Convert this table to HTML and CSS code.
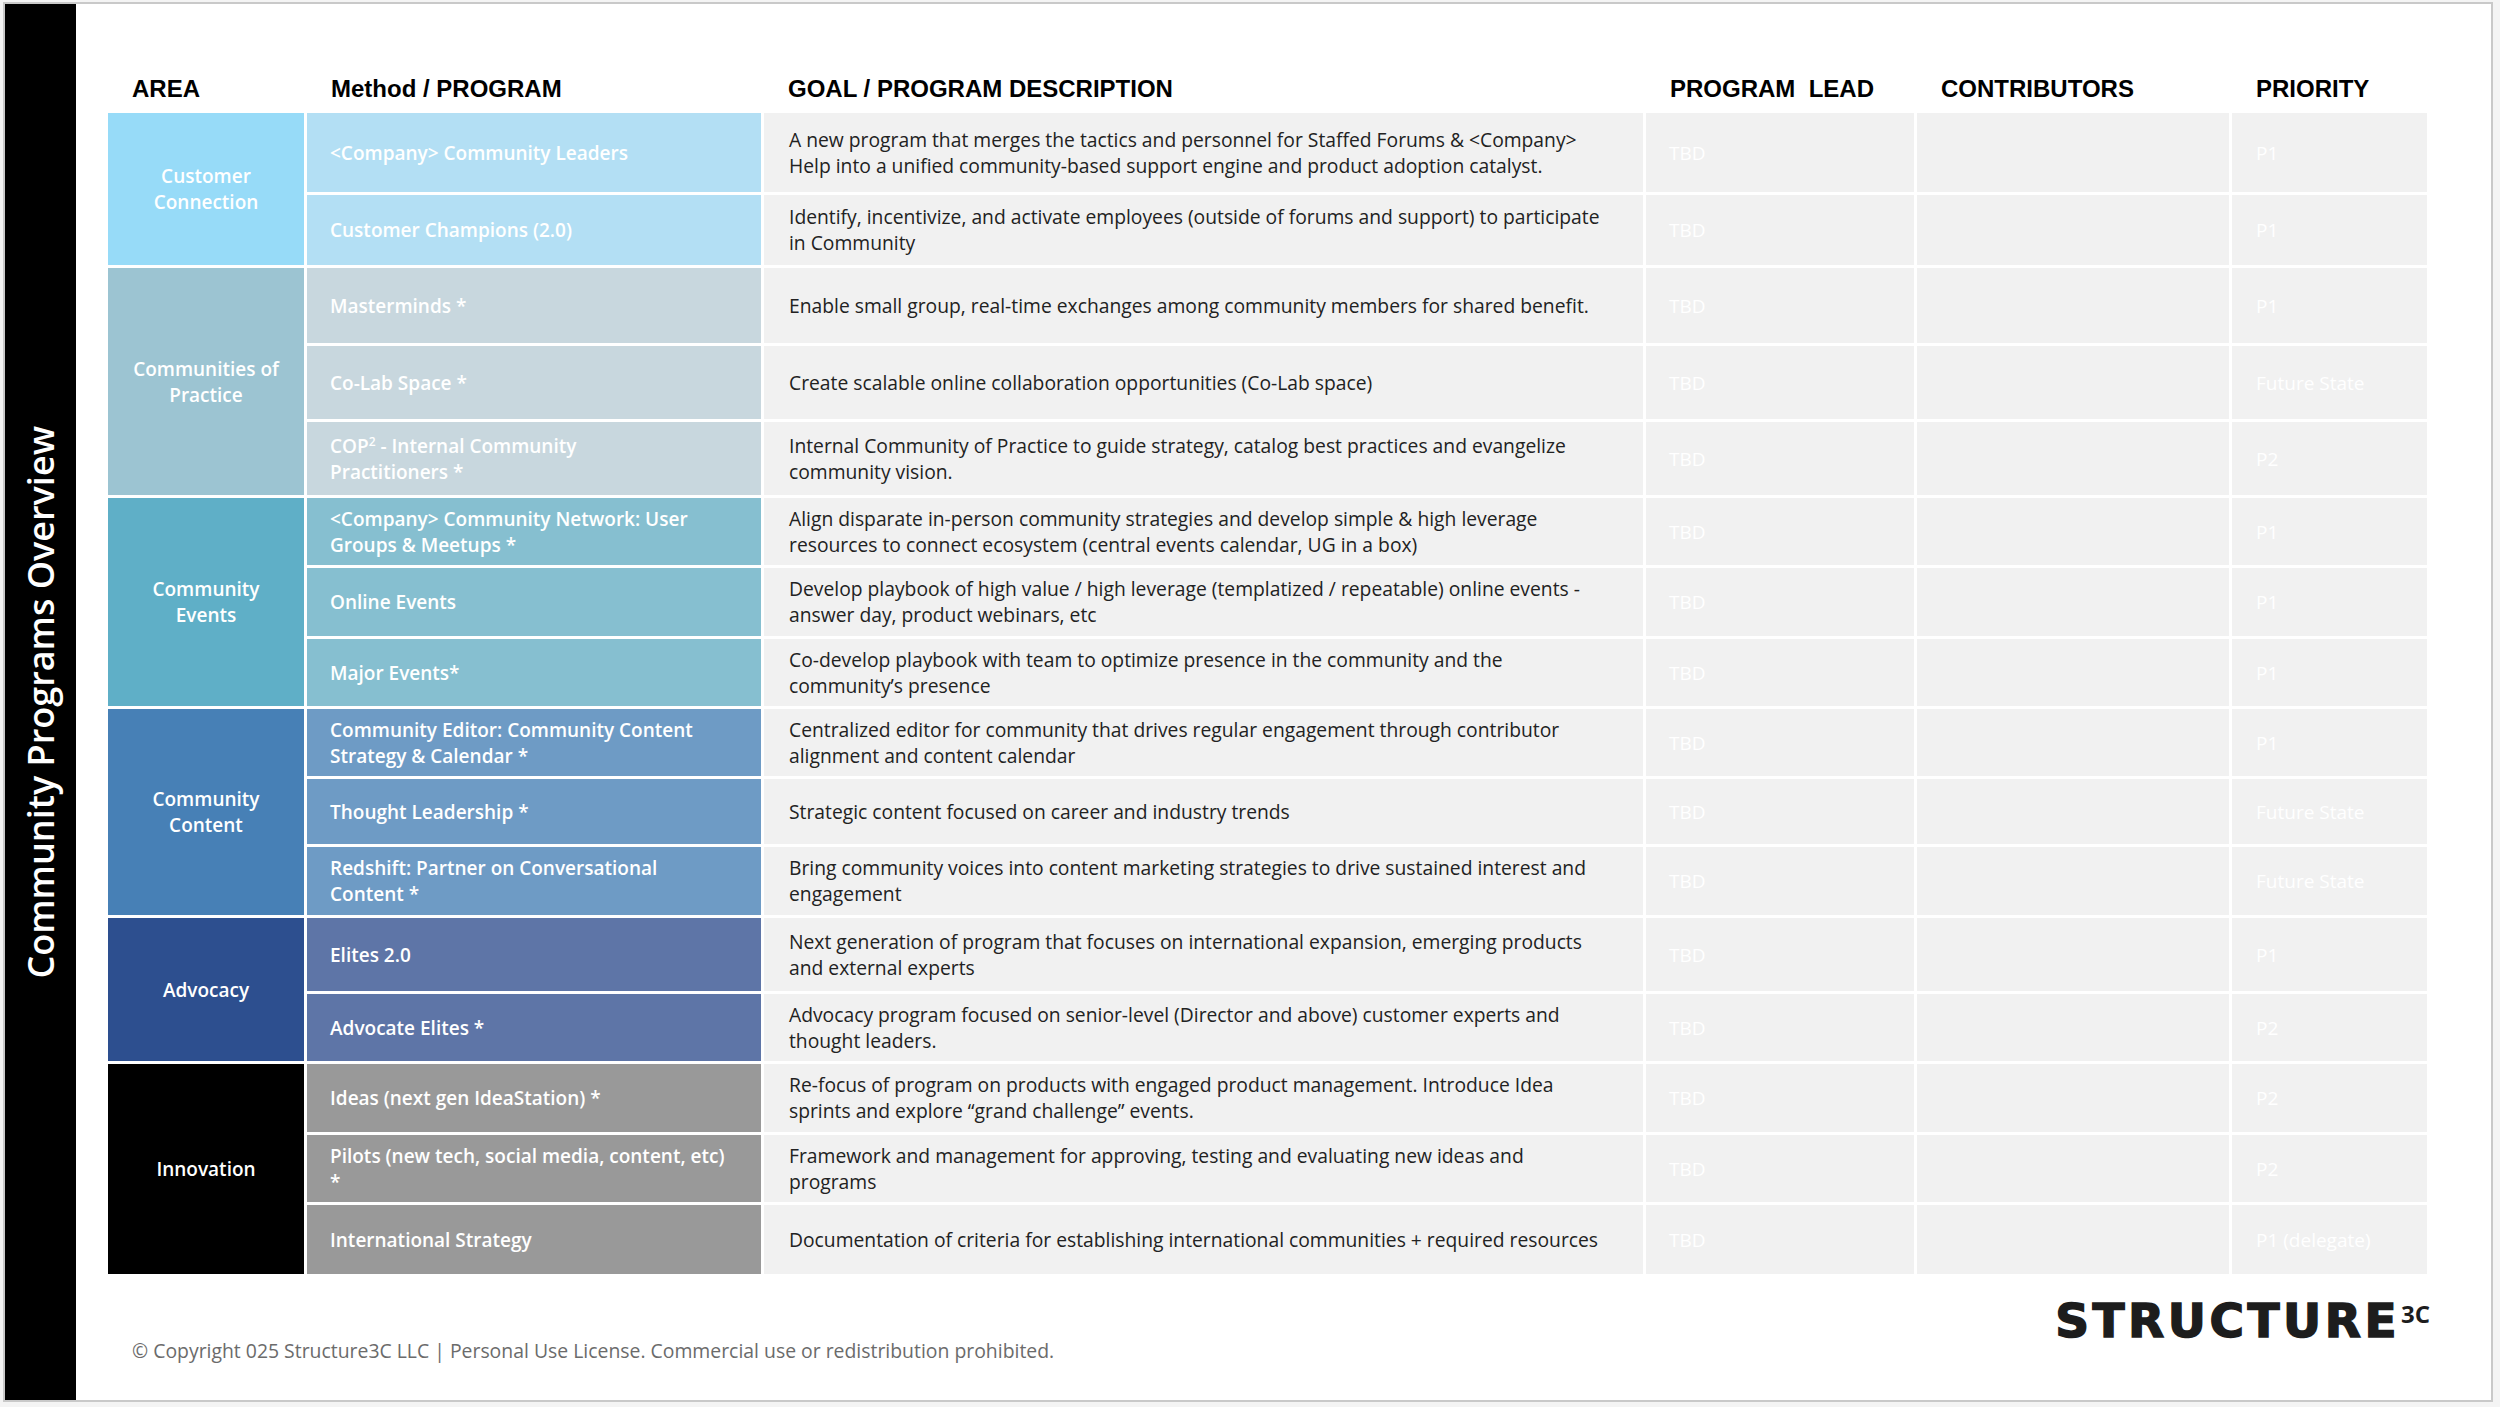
FILE: index.html
```html
<!DOCTYPE html>
<html lang="en">
<head>
<meta charset="utf-8">
<title>Community Programs Overview</title>
<link rel="stylesheet" href="styles.css">
</head>
<body>
<div class="slide">
  <aside class="sidebar">
    <div class="sidebar-title">Community Programs Overview</div>
  </aside>
  <main class="main">
    <div class="thead">
      <div class="th">AREA</div>
      <div class="th">Method / PROGRAM</div>
      <div class="th">GOAL / PROGRAM DESCRIPTION</div>
      <div class="th">PROGRAM &nbsp;LEAD</div>
      <div class="th">CONTRIBUTORS</div>
      <div class="th">PRIORITY</div>
    </div>
    <div class="tbody">
      <!-- Customer Connection -->
      <div class="cell area cc span2">Customer<br>Connection</div>
      <div class="cell method cc-m">&lt;Company&gt; Community Leaders</div>
      <div class="cell desc">A new program that merges the tactics and personnel for Staffed Forums &amp; &lt;Company&gt;<br>Help into a unified community-based support engine and product adoption catalyst.</div>
      <div class="cell lead">TBD</div><div class="cell contrib"></div><div class="cell prio">P1</div>

      <div class="cell method cc-m">Customer Champions (2.0)</div>
      <div class="cell desc">Identify, incentivize, and activate employees (outside of forums and support) to participate<br>in Community</div>
      <div class="cell lead">TBD</div><div class="cell contrib"></div><div class="cell prio">P1</div>

      <!-- Communities of Practice -->
      <div class="cell area cop span3">Communities of<br>Practice</div>
      <div class="cell method cop-m">Masterminds *</div>
      <div class="cell desc">Enable small group, real-time exchanges among community members for shared benefit.</div>
      <div class="cell lead">TBD</div><div class="cell contrib"></div><div class="cell prio">P1</div>

      <div class="cell method cop-m">Co-Lab Space *</div>
      <div class="cell desc">Create scalable online collaboration opportunities (Co-Lab space)</div>
      <div class="cell lead">TBD</div><div class="cell contrib"></div><div class="cell prio">Future State</div>

      <div class="cell method cop-m"><span>COP<sup>2</sup> - Internal Community<br>Practitioners *</span></div>
      <div class="cell desc">Internal Community of Practice to guide strategy, catalog best practices and evangelize<br>community vision.</div>
      <div class="cell lead">TBD</div><div class="cell contrib"></div><div class="cell prio">P2</div>

      <!-- Community Events -->
      <div class="cell area ev span3">Community<br>Events</div>
      <div class="cell method ev-m">&lt;Company&gt; Community Network: User<br>Groups &amp; Meetups *</div>
      <div class="cell desc">Align disparate in-person community strategies and develop simple &amp; high leverage<br>resources to connect ecosystem (central events calendar, UG in a box)</div>
      <div class="cell lead">TBD</div><div class="cell contrib"></div><div class="cell prio">P1</div>

      <div class="cell method ev-m">Online Events</div>
      <div class="cell desc">Develop playbook of high value / high leverage (templatized / repeatable) online events -<br>answer day, product webinars, etc</div>
      <div class="cell lead">TBD</div><div class="cell contrib"></div><div class="cell prio">P1</div>

      <div class="cell method ev-m">Major Events*</div>
      <div class="cell desc">Co-develop playbook with team to optimize presence in the community and the<br>community’s presence</div>
      <div class="cell lead">TBD</div><div class="cell contrib"></div><div class="cell prio">P1</div>

      <!-- Community Content -->
      <div class="cell area ct span3">Community<br>Content</div>
      <div class="cell method ct-m">Community Editor: Community Content<br>Strategy &amp; Calendar *</div>
      <div class="cell desc">Centralized editor for community that drives regular engagement through contributor<br>alignment and content calendar</div>
      <div class="cell lead">TBD</div><div class="cell contrib"></div><div class="cell prio">P1</div>

      <div class="cell method ct-m">Thought Leadership *</div>
      <div class="cell desc">Strategic content focused on career and industry trends</div>
      <div class="cell lead">TBD</div><div class="cell contrib"></div><div class="cell prio">Future State</div>

      <div class="cell method ct-m">Redshift: Partner on Conversational<br>Content *</div>
      <div class="cell desc">Bring community voices into content marketing strategies to drive sustained interest and<br>engagement</div>
      <div class="cell lead">TBD</div><div class="cell contrib"></div><div class="cell prio">Future State</div>

      <!-- Advocacy -->
      <div class="cell area adv span2">Advocacy</div>
      <div class="cell method adv-m">Elites 2.0</div>
      <div class="cell desc">Next generation of program that focuses on international expansion, emerging products<br>and external experts</div>
      <div class="cell lead">TBD</div><div class="cell contrib"></div><div class="cell prio">P1</div>

      <div class="cell method adv-m">Advocate Elites *</div>
      <div class="cell desc">Advocacy program focused on senior-level (Director and above) customer experts and<br>thought leaders.</div>
      <div class="cell lead">TBD</div><div class="cell contrib"></div><div class="cell prio">P2</div>

      <!-- Innovation -->
      <div class="cell area inn span3">Innovation</div>
      <div class="cell method inn-m">Ideas (next gen IdeaStation) *</div>
      <div class="cell desc">Re-focus of program on products with engaged product management. Introduce Idea<br>sprints and explore “grand challenge” events.</div>
      <div class="cell lead">TBD</div><div class="cell contrib"></div><div class="cell prio">P2</div>

      <div class="cell method inn-m">Pilots (new tech, social media, content, etc)<br>*</div>
      <div class="cell desc">Framework and management for approving, testing and evaluating new ideas and<br>programs</div>
      <div class="cell lead">TBD</div><div class="cell contrib"></div><div class="cell prio">P2</div>

      <div class="cell method inn-m">International Strategy</div>
      <div class="cell desc">Documentation of criteria for establishing international communities + required resources</div>
      <div class="cell lead">TBD</div><div class="cell contrib"></div><div class="cell prio">P1 (delegate)</div>
    </div>
    <footer class="footer">
      <div class="copyright">© Copyright 025 Structure3C LLC | Personal Use License. Commercial use or redistribution prohibited.</div>
      <div class="logo"><span class="logo-word">STRUCTURE</span><span class="logo-sup">3C</span></div>
    </footer>
  </main>
</div>
</body>
</html>
```
FILE: styles.css
```css
* { box-sizing: border-box; }
html, body { margin: 0; padding: 0; }
body {
  width: 2500px;
  height: 1407px;
  overflow: hidden;
  background: #f4f4f4;
  font-family: "Open Sans", "Liberation Sans", sans-serif;
}
.slide {
  margin: 2px 0 0 3px;
  width: 2490px;
  height: 1400px;
  border: 2px solid #c9c9c9;
  background: #ffffff;
  display: flex;
}
.sidebar {
  flex: none;
  width: 71px;
  background: #000;
  display: flex;
  align-items: center;
  justify-content: center;
}
.sidebar-title {
  writing-mode: vertical-rl;
  transform: rotate(180deg);
  color: #fff;
  font-family: "Open Sans", sans-serif;
  font-weight: 600;
  font-size: 36px;
  line-height: 1;
  white-space: nowrap;
}
.main {
  flex: 1;
  padding: 64px 0 0 32px;
}
.thead, .tbody {
  display: grid;
  grid-template-columns: 196px 454px 879px 268px 312px 195px;
  column-gap: 3px;
}
.thead {
  height: 42px;
  margin-bottom: 3px;
}
.th {
  font-family: "Liberation Sans", Arial, sans-serif;
  font-weight: 700;
  font-size: 24px;
  line-height: 42px;
  padding-left: 24px;
  color: #000;
  white-space: nowrap;
}
.tbody {
  row-gap: 3px;
  grid-template-rows: 79px 70px 75px 73px 73px 67px 68px 67px 67px 65px 68px 73px 67px 68px 67px 69px;
}
.cell {
  display: flex;
  align-items: center;
  font-size: 19px;
  line-height: 26px;
  white-space: nowrap;
}
.span2 { grid-row: span 2; }
.span3 { grid-row: span 3; }
.area {
  justify-content: center;
  text-align: center;
  color: #fff;
  font-weight: 600;
}
.method {
  padding-left: 23px;
  color: #fff;
  font-weight: 600;
}
.method sup {
  font-size: 12px;
  line-height: 0;
  vertical-align: 7px;
}
.desc {
  padding-left: 25px;
  background: #f1f1f1;
  color: #222;
  font-size: 19.3px;
}
.lead, .contrib, .prio {
  background: #f1f1f1;
  color: #fff;
  padding-left: 23px;
}
.prio { padding-left: 24px; }

.cc { background: #97dbf8; }
.cc-m { background: #b3dff4; }
.cop { background: #9cc4d2; }
.cop-m { background: #c8d7de; }
.ev { background: #5fafc7; }
.ev-m { background: #86bfd0; }
.ct { background: #4780b6; }
.ct-m { background: #6e9bc5; }
.adv { background: #2d4f8f; }
.adv-m { background: #5e75a7; }
.inn { background: #000000; }
.inn-m { background: #999999; }

.footer {
  display: flex;
  justify-content: space-between;
  align-items: flex-start;
  width: 2322px;
}
.copyright {
  margin: 64px 0 0 24px;
  font-size: 19.4px;
  line-height: 26px;
  color: #6b6b6b;
  white-space: nowrap;
}
.logo {
  margin-top: 29px;
  display: flex;
  align-items: flex-start;
}
.logo-word {
  font-family: "DejaVu Sans", sans-serif;
  font-weight: 700;
  font-size: 47px;
  line-height: 36px;
  letter-spacing: 3.5px;
  color: #1d1d1d;
  -webkit-text-stroke: 1.5px #1d1d1d;
}
.logo-sup {
  font-family: "Open Sans", sans-serif;
  font-weight: 700;
  font-size: 24px;
  line-height: 20px;
  margin: 1px 0 0 1px;
  color: #1d1d1d;
}
```
